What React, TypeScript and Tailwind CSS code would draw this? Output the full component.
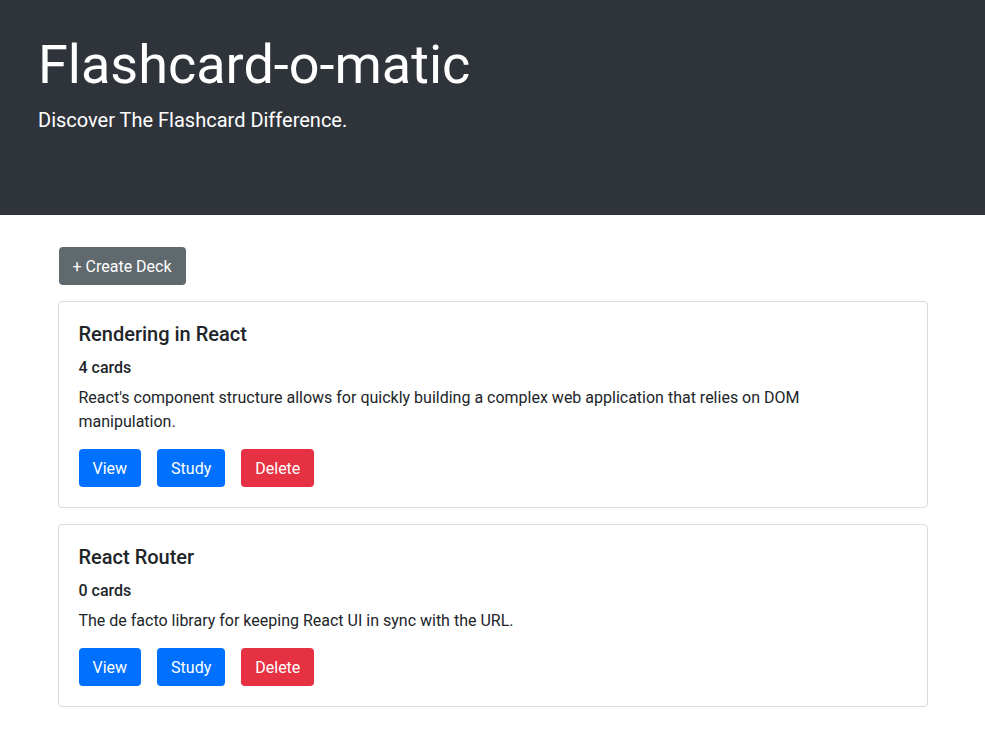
type Deck = { id: number; name: string; cards: number; description: string };

const decks: Deck[] = [
  {
    id: 1,
    name: "Rendering in React",
    cards: 4,
    description:
      "React's component structure allows for quickly building a complex web application that relies on DOM manipulation.",
  },
  {
    id: 2,
    name: "React Router",
    cards: 0,
    description: "The de facto library for keeping React UI in sync with the URL.",
  },
];

const button = "h-[38px] rounded px-[14px] pt-px text-base leading-6 text-white";

function DeckCard({ deck }: { deck: Deck }) {
  return (
    <article className="rounded border border-[#d9dadb] p-5">
      <h2 className="mb-3 text-xl leading-6 font-medium">{deck.name}</h2>
      <h3 className="mb-2 text-base leading-5 font-medium">{deck.cards} cards</h3>
      <p className="mb-[15px] pr-12 text-base leading-6">{deck.description}</p>
      <div className="flex gap-4">
        <button type="button" className={`${button} bg-[#0070ff]`}>View</button>
        <button type="button" className={`${button} bg-[#0070ff]`}>Study</button>
        <button type="button" className={`${button} bg-[#e63142]`}>Delete</button>
      </div>
    </article>
  );
}

export default function App() {
  return (
    <div className="min-h-screen bg-white font-[Roboto,'Liberation_Sans',sans-serif] text-[#212529]">
      <header className="bg-[#2f333a] px-[38px] pt-8 pb-[81px] text-white">
        <h1 className="mb-2 text-[54px] leading-[66px] font-normal">Flashcard-o-matic</h1>
        <p className="text-xl leading-7 font-normal">Discover The Flashcard Difference.</p>
      </header>
      <main className="mx-auto flex max-w-[870px] flex-col gap-4 pt-8 pb-12">
        <button type="button" className={`${button} ml-px self-start bg-[#60696e]`}>+ Create Deck</button>
        {decks.map((deck) => (
          <DeckCard key={deck.id} deck={deck} />
        ))}
      </main>
    </div>
  );
}
